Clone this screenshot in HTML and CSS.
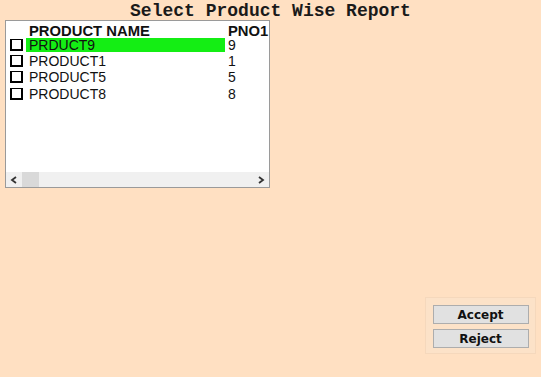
FILE: index.html
```html
<!DOCTYPE html>
<html lang="en">
<head>
    <meta charset="UTF-8">
    <title>Select Product Wise Report</title>
    <link rel="stylesheet" href="styles.css">
</head>
<body>
    <div class="page">
        <h1 class="title">Select Product Wise Report</h1>
        <div class="listbox">
            <div class="list-body">
                <div class="row head">
                    <span class="check-space"></span>
                    <span class="name">PRODUCT NAME</span>
                    <span class="pno">PNO1</span>
                </div>
                <div class="row">
                    <span class="check"></span>
                    <span class="name selected">PRDUCT9</span>
                    <span class="pno">9</span>
                </div>
                <div class="row">
                    <span class="check"></span>
                    <span class="name">PRODUCT1</span>
                    <span class="pno">1</span>
                </div>
                <div class="row">
                    <span class="check"></span>
                    <span class="name">PRODUCT5</span>
                    <span class="pno">5</span>
                </div>
                <div class="row">
                    <span class="check"></span>
                    <span class="name">PRODUCT8</span>
                    <span class="pno">8</span>
                </div>
            </div>
            <div class="hscroll">
                <span class="arrow">
                    <svg width="8" height="8" viewBox="0 0 8 8"><path d="M6 1 L2 4 L6 7" fill="none" stroke="#333" stroke-width="1.8"/></svg>
                </span>
                <div class="track"><div class="thumb"></div></div>
                <span class="arrow">
                    <svg width="8" height="8" viewBox="0 0 8 8"><path d="M2 1 L6 4 L2 7" fill="none" stroke="#333" stroke-width="1.8"/></svg>
                </span>
            </div>
        </div>
        <div class="actions">
            <button class="btn">Accept</button>
            <button class="btn">Reject</button>
        </div>
    </div>
</body>
</html>
```

FILE: styles.css
```css
html, body {
    margin: 0;
    padding: 0;
    width: 100%;
    height: 100%;
    background-color: #FFE0C2;
    font-family: "Liberation Sans", Arial, sans-serif;
    overflow: hidden;
}
.page {
    position: relative;
    width: 541px;
    height: 377px;
}
.title {
    margin: 0;
    padding-top: 2px;
    text-align: center;
    font-family: "Liberation Mono", "Courier New", monospace;
    font-weight: bold;
    font-size: 18px;
    line-height: 18px;
    color: #1a1a1a;
}
.listbox {
    margin-left: 5px;
    width: 263px;
    height: 166px;
    background: #fff;
    border: 1px solid #9a9a9a;
    display: flex;
    flex-direction: column;
}
.list-body {
    flex: 1;
    padding-top: 3px;
}
.row {
    display: flex;
    align-items: center;
    height: 16px;
    font-size: 14px;
    color: #111;
}
.row:last-child {
    margin-top: 1px;
}
.row.head {
    font-weight: bold;
    font-size: 14.8px;
    height: 13px;
}
.check, .check-space {
    width: 13px;
    height: 12px;
    margin: 0 4px 0 4px;
    box-sizing: border-box;
}
.check {
    border: 2px solid #000;
    border-top-width: 1px;
    background: #fff;
}
.name {
    width: 199px;
    margin-left: -1px;
    padding-left: 3px;
    height: 14px;
    line-height: 14px;
    box-sizing: border-box;
}
.name.selected {
    background: #14EE14;
}
.pno {
    padding-left: 3px;
}
.hscroll {
    height: 15px;
    background: #F0F0F0;
    display: flex;
    align-items: center;
}
.arrow {
    width: 16px;
    height: 15px;
    display: flex;
    align-items: center;
    justify-content: center;
}
.track {
    flex: 1;
    height: 15px;
}
.thumb {
    width: 17px;
    height: 15px;
    background: #D9D9D9;
}
.actions {
    position: absolute;
    left: 425px;
    top: 297px;
    width: 111px;
    height: 57px;
    box-sizing: border-box;
    background: #FCE2C8;
    border: 1px solid #F5D8BC;
    display: flex;
    flex-direction: column;
    align-items: center;
    gap: 5px;
    padding-top: 7px;
}
.btn {
    width: 96px;
    height: 19px;
    padding: 0;
    background: #E1E1E1;
    border: 1px solid #ADADAD;
    font-family: "DejaVu Sans", Tahoma, sans-serif;
    font-weight: bold;
    font-size: 12px;
    color: #111;
}
```
